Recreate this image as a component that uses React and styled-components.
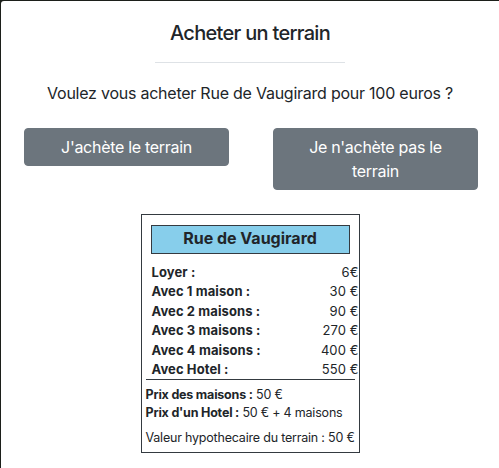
import React from 'react'
import styled, { createGlobalStyle } from 'styled-components'

const GlobalStyle = createGlobalStyle`
  html, body {
    margin: 0;
    padding: 0;
    background: #1c1f1a;
    font-family: Inter, "Liberation Sans", Arial, sans-serif;
    color: #212529;
  }
`

const Modal = styled.div`
  margin: 1px 0 0 1px;
  min-height: 467px;
  background: #fff;
  border-top-left-radius: 3px;
  box-sizing: border-box;
  display: flex;
  flex-direction: column;
  align-items: center;
`

const Title = styled.h5`
  margin: 0;
  padding-top: 20px;
  font-size: 20px;
  font-weight: 500;
  line-height: 24px;
  letter-spacing: -0.7px;
`

const Divider = styled.hr`
  width: 190px;
  margin: 17px 0 0;
  border: 0;
  border-top: 1px solid #dee2e6;
`

const Question = styled.p`
  margin: 18px 0 0;
  font-size: 16px;
  line-height: 24px;
  letter-spacing: -0.24px;
`

const Actions = styled.div`
  align-self: stretch;
  display: flex;
  justify-content: space-between;
  align-items: flex-start;
  padding: 0 21px 0 23px;
  margin-top: 23px;
`

const Button = styled.button`
  width: 205px;
  padding: 6px 12px;
  border: 1px solid #6c757d;
  border-radius: 4px;
  background: #6c757d;
  color: #fff;
  font-family: inherit;
  font-size: 16px;
  line-height: 24px;
  letter-spacing: -0.3px;
  cursor: pointer;
`

const Card = styled.div`
  width: 219px;
  margin-top: 24px;
  border: 1px solid #343a40;
  box-sizing: border-box;
  padding: 10px 0 5px;
`

const CardTitle = styled.div`
  margin: 0 9px;
  height: 29px;
  box-sizing: border-box;
  background: #87ceeb;
  border: 1px solid #343a40;
  font-size: 16px;
  font-weight: 700;
  text-align: center;
  line-height: 25px;
`

const Rents = styled.div`
  margin: 9px 4px 0;
  border-bottom: 1px solid #343a40;
`

const Rent = styled.div`
  display: flex;
  justify-content: space-between;
  padding-left: 6px;
  margin-right: -4px;
  font-size: 13px;
  line-height: 19.4px;
  letter-spacing: 0.1px;
`

const Label = styled.span`
  font-weight: 700;
`

const Line = styled.div`
  padding: 0 4px;
  font-size: 12.5px;
  line-height: 18px;
  letter-spacing: -0.2px;
  white-space: nowrap;
  margin-top: ${p => p.$gap || 0}px;
  text-align: ${p => p.$center ? 'center' : 'left'};
`

const rents = [
  ['Loyer :', '6€'],
  ['Avec 1 maison :', '30 €'],
  ['Avec 2 maisons :', '90 €'],
  ['Avec 3 maisons :', '270 €'],
  ['Avec 4 maisons :', '400 €'],
  ['Avec Hotel :', '550 €'],
]

const App = () => {
  return (
    <>
      <GlobalStyle />
      <Modal>
        <Title>Acheter un terrain</Title>
        <Divider />
        <Question>Voulez vous acheter Rue de Vaugirard pour 100 euros ?</Question>
        <Actions>
          <Button>J'achète le terrain</Button>
          <Button>Je n'achète pas le terrain</Button>
        </Actions>
        <Card>
          <CardTitle>Rue de Vaugirard</CardTitle>
          <Rents>
            {rents.map(([label, value]) => (
              <Rent key={label}>
                <Label>{label}</Label>
                <span>{value}</span>
              </Rent>
            ))}
          </Rents>
          <Line $gap={6}><Label>Prix des maisons :</Label> 50 €</Line>
          <Line><Label>Prix d'un Hotel :</Label> 50 € + 4 maisons</Line>
          <Line $gap={7} $center>Valeur hypothecaire du terrain : 50 €</Line>
        </Card>
      </Modal>
    </>
  )
}

export default App
